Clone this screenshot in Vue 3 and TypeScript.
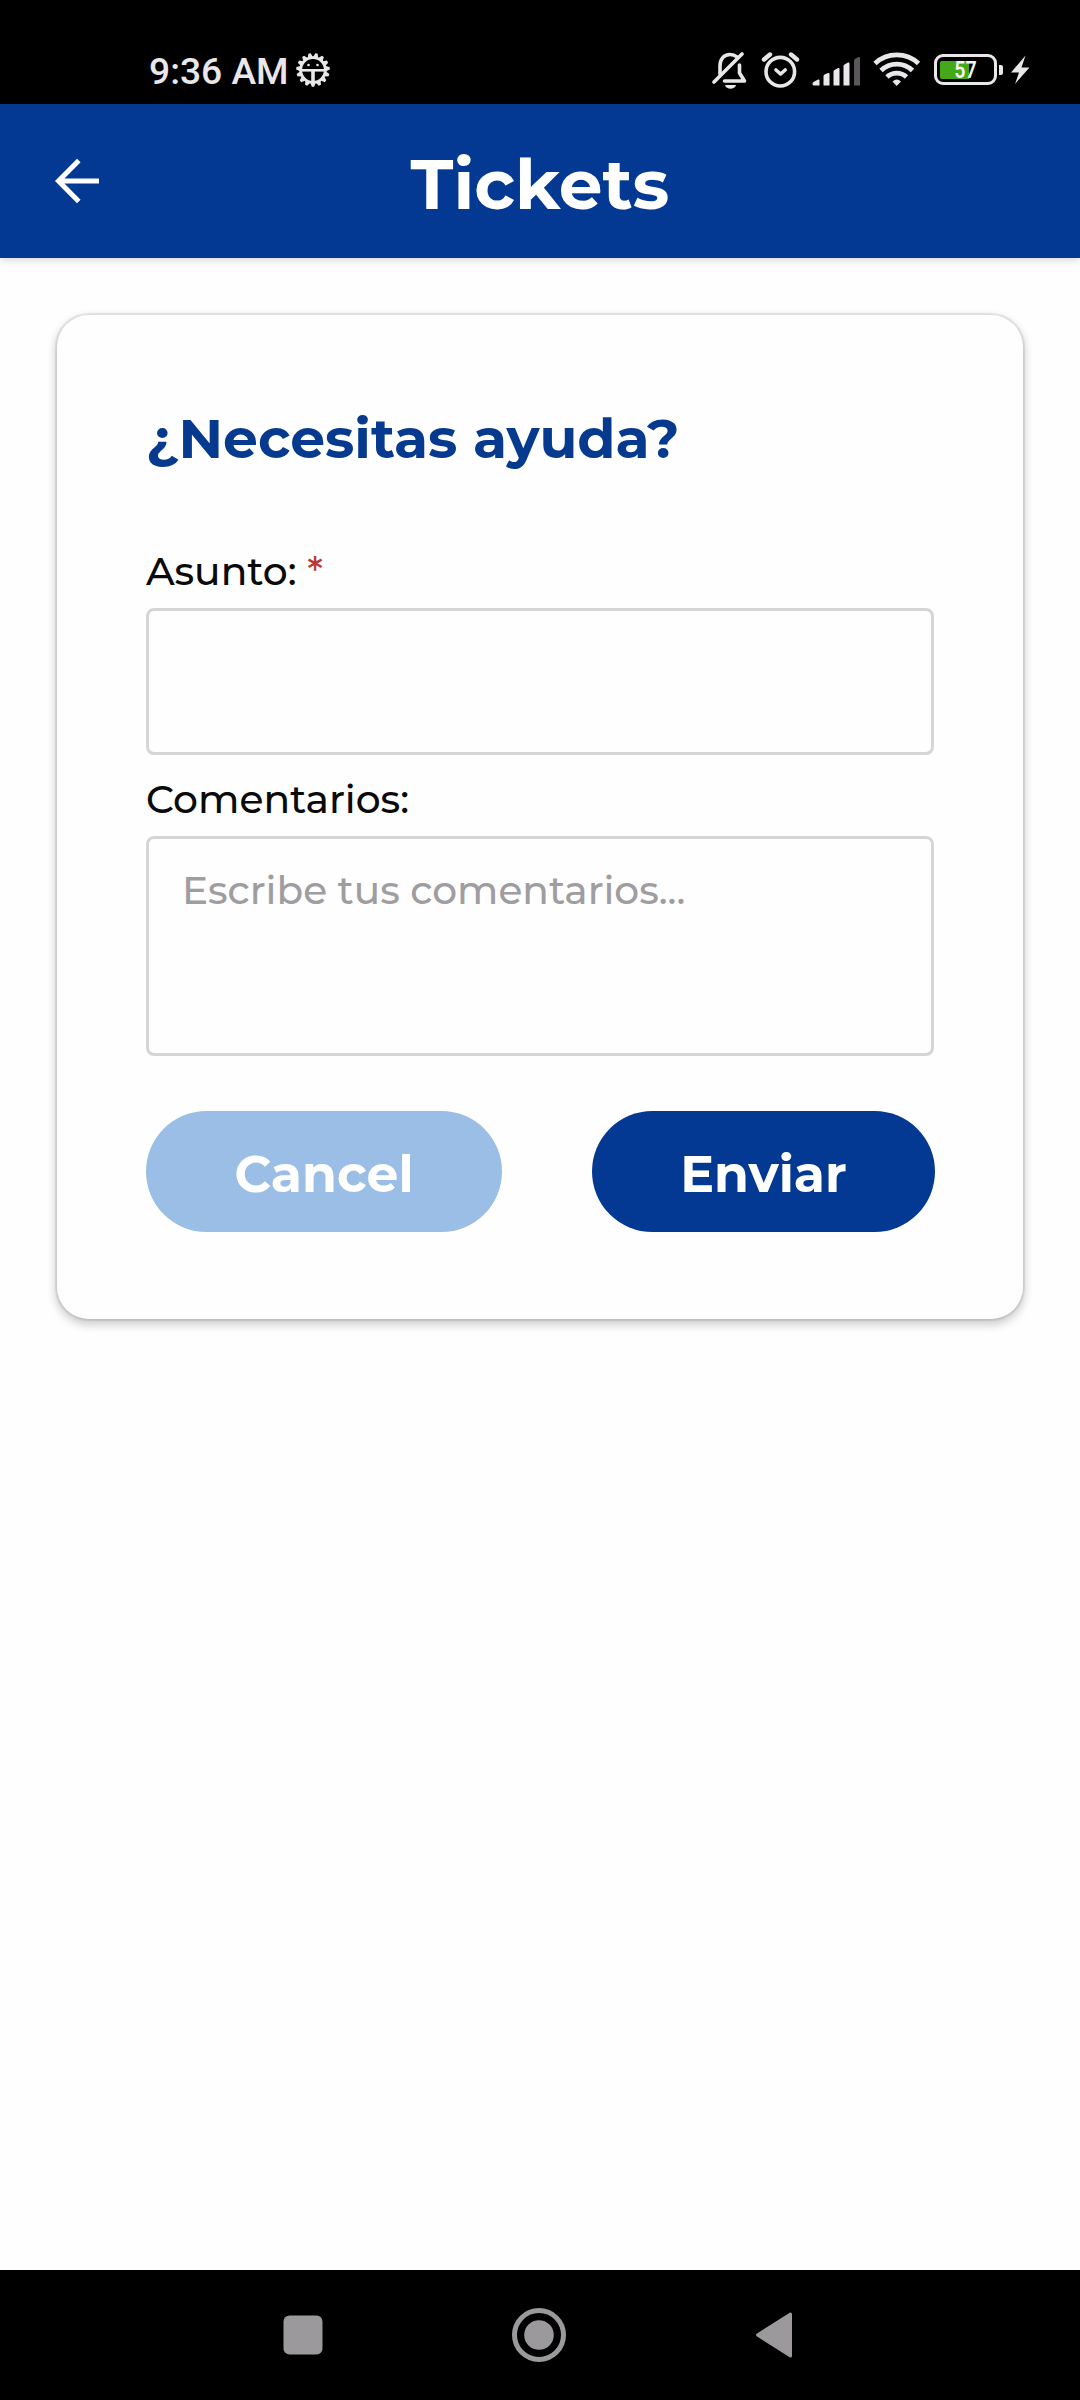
<script setup lang="ts">
import { ref } from 'vue'

const subject = ref<string>('')
const comments = ref<string>('')

// Teeth of the gear badge, one every 24 degrees
const teeth: number[] = Array.from({ length: 15 }, (_, i) => i * 24 + 12)
</script>

<template>
  <div class="screen">
    <div class="status">
      <span class="time">9:36 AM</span>
      <svg class="gear" width="36" height="36" viewBox="-18 -18 36 36">
        <circle r="12.300" fill="none" stroke="#e9e7ea" stroke-width="2.800" />
        <path v-for="a in teeth" :key="a" d="M-2.600-12.800L-1.200-16.800H1.200L2.600-12.800z" fill="#e9e7ea" :transform="`rotate(${a})`" />
        <path d="M-12 .3H12" fill="none" stroke="#e9e7ea" stroke-width="2.600" />
        <path d="M0 .5V13" fill="none" stroke="#e9e7ea" stroke-width="3.600" />
        <circle cx="-4.500" cy="-5" r="1.300" fill="#e9e7ea" />
        <circle cx="4.500" cy="-5" r="1.300" fill="#e9e7ea" />
      </svg>
      <span class="grow"></span>
      <svg class="bell" width="36" height="40" viewBox="0 0 36 40" fill="none" stroke="#e9e7ea" stroke-width="3.600" stroke-linecap="round">
        <path d="M8 24V16C8 9 12 4.500 18 4.500C20.800 4.500 23 5.300 24.600 6.800M27.500 15V23L32.500 31H12.500" stroke-linejoin="round" />
        <path d="M2 32L30 4" />
        <path d="M13 35H24C23 40 14 40 13 35z" fill="#e9e7ea" stroke="none" />
      </svg>
      <svg class="alarm" width="40" height="40" viewBox="0 0 40 40" fill="none" stroke="#e9e7ea" stroke-linecap="round">
        <circle cx="19.300" cy="21.700" r="14.300" stroke-width="3.600" />
        <path d="M3 9.500L9 4.500M30 4.500L36 9.500" stroke-width="4.400" />
        <path d="M15 20L19.600 24L24.200 20" stroke-width="3.600" stroke-linejoin="round" />
      </svg>
      <svg class="signal" width="50" height="32" viewBox="0 0 50 32" fill="#e9e7ea">
        <path d="M.5 29Q.5 27.500 1.500 27L6 24.500Q7.500 24 7.500 25.500V30.500H2Q.5 30.500 .5 29z" />
        <path d="M11.500 21Q11.500 20 12.500 19.500L16 18Q17.500 17.500 17.500 19V30.500H11.500z" />
        <path d="M21.500 16.500Q21.500 15.500 22.500 15L26 13Q27.500 12.500 27.500 14V30.500H21.500z" />
        <path d="M31.500 11Q31.500 10 32.500 9.500L36 7.500Q37.500 7 37.500 8.500V30.500H31.500z" />
        <path d="M42 5.500Q42 4.500 43 4L46.500 2Q48 1.500 48 3V30.500H42z" fill="#59575a" />
      </svg>
      <svg class="wifi" width="48" height="36" viewBox="0 0 48 36" fill="none" stroke="#e9e7ea" stroke-width="4.800">
        <path d="M2 12.500A32 32 0 0 1 45.500 12.500" />
        <path d="M8 19.500A22.500 22.500 0 0 1 39.500 19.500" />
        <path d="M14 26A14 14 0 0 1 33.500 26" />
        <path d="M23.700 35L19.500 30.500Q23.700 26.500 28 30.500z" fill="#e9e7ea" stroke="none" />
      </svg>
      <div class="battery">
        <div class="level"></div>
        <span class="pct">57</span>
      </div>
      <i class="cap"></i>
      <svg class="bolt" width="22" height="32" viewBox="0 0 22 32">
        <path d="M15.500 1.500L1 18.500H9L5 30L19.500 13.500H11.500z" fill="#e9e7ea" />
      </svg>
    </div>

    <header class="bar">
      <svg class="back" width="48" height="48" viewBox="0 0 48 48" fill="none" stroke="#fff" stroke-width="5">
        <path d="M47 24H6M26.800 3.500L6.500 24L26.800 44.500" />
      </svg>
      <h1>Tickets</h1>
    </header>

    <main>
      <section class="card">
        <h2>¿Necesitas ayuda?</h2>
        <label class="lbl first" for="subject">Asunto: <span class="req">*</span></label>
        <input id="subject" v-model="subject" class="field" type="text" />
        <label class="lbl second" for="comments">Comentarios:</label>
        <textarea id="comments" v-model="comments" class="field area" placeholder="Escribe tus comentarios..."></textarea>
        <div class="actions">
          <button class="btn cancel" type="button">Cancel</button>
          <button class="btn send" type="button">Enviar</button>
        </div>
      </section>
    </main>

    <nav class="nav">
      <svg width="40" height="40" viewBox="0 0 40 40"><rect x=".500" y=".500" width="39" height="39" rx="6" fill="#9b999c" /></svg>
      <svg class="home" width="54" height="54" viewBox="0 0 54 54">
        <circle cx="27" cy="27" r="24.500" fill="none" stroke="#9b999c" stroke-width="5" />
        <circle cx="27" cy="27" r="14.800" fill="#9b999c" />
      </svg>
      <svg class="prev" width="38" height="48" viewBox="0 0 38 48">
        <path d="M2.500 24L35.500 3V45z" fill="#9b999c" stroke="#9b999c" stroke-width="3" stroke-linejoin="round" />
      </svg>
    </nav>
  </div>
</template>

<style>
body {
  margin: 0;
}
</style>

<style scoped>
.screen {
  width: 1080px;
  height: 2400px;
  display: flex;
  flex-direction: column;
  background: #fefefe;
  font-family: Montserrat, Inter, "Open Sans", sans-serif;
}
.screen * {
  box-sizing: border-box;
}
.status {
  height: 104px;
  flex: none;
  background: #000;
  display: flex;
  align-items: flex-start;
  padding: 50px 48px 0 149px;
}
.time {
  font: 500 37.2px/42px Roboto, sans-serif;
  color: #e9e7ea;
  width: 146px;
  white-space: nowrap;
}
.gear {
  margin-top: 2px;
}
.grow {
  flex: 1;
}
.bell {
  margin-right: 13px;
}
.alarm {
  margin-right: 11px;
}
.signal {
  margin: 5px 11px 0 0;
}
.wifi {
  margin: 1px 13px 0 0;
}
.battery {
  width: 63px;
  height: 31px;
  margin-top: 4px;
  border: 3.5px solid #e9e7ea;
  border-radius: 9px;
  display: grid;
  align-items: center;
}
.level {
  grid-area: 1 / 1;
  width: 29px;
  height: 18px;
  margin-left: 3px;
  background: #43a91b;
  border-radius: 2px 0 0 2px;
}
.pct {
  grid-area: 1 / 1;
  text-align: center;
  font: 600 24px/24px Roboto, sans-serif;
  color: #f4f4f4;
  transform: scaleX(0.82);
}
.cap {
  width: 4px;
  height: 10px;
  margin: 15px 7px 0 2px;
  border-radius: 0 2px 2px 0;
  background: #e9e7ea;
}
.bolt {
  margin-top: 4px;
}
.bar {
  height: 154px;
  flex: none;
  background: #043993;
  display: grid;
  align-items: center;
  box-shadow: 0 2px 8px rgba(0, 0, 0, 0.16);
}
.back {
  grid-area: 1 / 1;
  margin-left: 52px;
}
.bar h1 {
  grid-area: 1 / 1;
  margin: 0;
  padding-top: 6px;
  text-align: center;
  color: #fff;
  font-size: 69.3px;
  line-height: 80px;
  font-weight: 700;
}
main {
  flex: 1;
  padding: 57px 57px 0;
}
.card {
  height: 1004px;
  padding: 89px 89px 0;
  border-radius: 32px;
  background: #fefefe;
  box-shadow: 0 0 1px 2px rgba(0, 0, 0, 0.08), 0 4px 8px 2px rgba(0, 0, 0, 0.19);
  display: flex;
  flex-direction: column;
}
h2 {
  margin: 0;
  font-size: 55.2px;
  line-height: 70px;
  font-weight: 700;
  color: #063a8e;
  white-space: nowrap;
}
.lbl {
  font-size: 39.2px;
  line-height: 46px;
  color: #0a0a0a;
  font-weight: 500;
  white-space: nowrap;
}
.first {
  margin-top: 74px;
}
.req {
  color: #b93a35;
}
.field {
  width: 788px;
  height: 147px;
  border: 3px solid #d6d4d7;
  border-radius: 8px;
  background: transparent;
  outline: none;
  padding: 0 33px;
  font: inherit;
  font-size: 39.1px;
  font-weight: 500;
}
#subject {
  margin-top: 14px;
}
.second {
  margin-top: 21px;
}
.area {
  display: block;
  height: 220px;
  margin-top: 14px;
  padding: 28px 33px;
  line-height: 46px;
  resize: none;
  overflow: hidden;
}
.area::placeholder {
  color: #9f9da0;
  opacity: 1;
}
.actions {
  display: flex;
  justify-content: space-between;
  width: 789px;
  margin-top: 55px;
}
.btn {
  height: 121px;
  border: 0;
  border-radius: 61px;
  color: #fff;
  font: inherit;
  font-size: 50.5px;
  font-weight: 700;
  padding: 5px 0 0;
}
.cancel {
  width: 356px;
  background: #9abee6;
}
.send {
  width: 343px;
  background: #043993;
}
.nav {
  height: 130px;
  flex: none;
  background: #000;
  display: flex;
  align-items: center;
  padding-left: 283px;
}
.home {
  margin-left: 189px;
}
.prev {
  margin-left: 189px;
}
</style>
